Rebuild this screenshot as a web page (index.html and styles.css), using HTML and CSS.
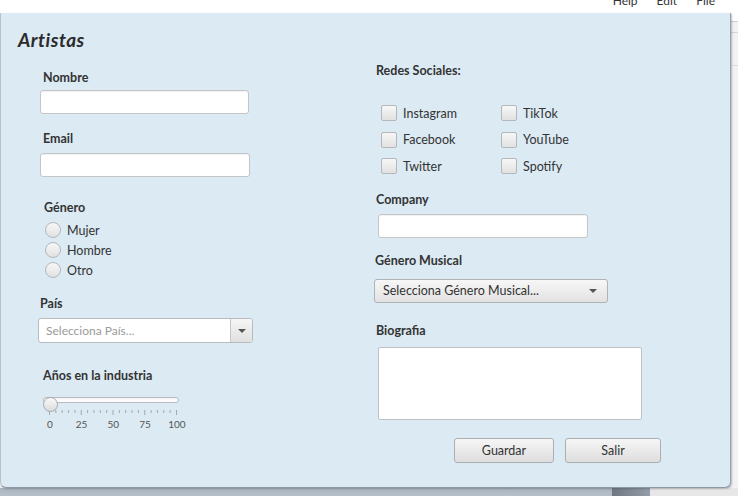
FILE: index.html
```html
<!DOCTYPE html>
<html lang="es">
<head>
<meta charset="utf-8">
<title>Artistas</title>
<link rel="stylesheet" href="styles.css">
</head>
<body>
<div class="menubar">
  <span class="menu-item">Help</span>
  <span class="menu-item">Edit</span>
  <span class="menu-item">File</span>
</div>
<div class="main">
  <div class="panel">
    <h1 class="title">Artistas</h1>
    <div class="columns">
      <div class="col col-left">
        <label class="lbl lbl-nombre">Nombre</label>
        <div class="field field-nombre"></div>
        <label class="lbl lbl-email">Email</label>
        <div class="field field-email"></div>
        <label class="lbl lbl-genero">Género</label>
        <div class="radios">
          <div class="radio-row"><span class="radio"></span><span>Mujer</span></div>
          <div class="radio-row"><span class="radio"></span><span>Hombre</span></div>
          <div class="radio-row"><span class="radio"></span><span>Otro</span></div>
        </div>
        <label class="lbl lbl-pais">País</label>
        <div class="combo-edit">
          <span class="combo-prompt">Selecciona País...</span>
          <span class="combo-arrow-btn"><span class="arrow"></span></span>
        </div>
        <label class="lbl lbl-anos">Años en la industria</label>
        <div class="slider">
          <div class="slider-bar">
            <div class="track"></div>
            <span class="thumb"></span>
          </div>
          <svg class="ticks" width="136" height="5" viewBox="0 0 136 5">
            <g stroke="#a3a9ae" stroke-width="1">
              <line x1="6.5" y1="0" x2="6.5" y2="5"/>
              <line x1="12.85" y1="0" x2="12.85" y2="3"/>
              <line x1="19.2" y1="0" x2="19.2" y2="3"/>
              <line x1="25.55" y1="0" x2="25.55" y2="3"/>
              <line x1="31.9" y1="0" x2="31.9" y2="3"/>
              <line x1="38.25" y1="0" x2="38.25" y2="5"/>
              <line x1="44.6" y1="0" x2="44.6" y2="3"/>
              <line x1="50.95" y1="0" x2="50.95" y2="3"/>
              <line x1="57.3" y1="0" x2="57.3" y2="3"/>
              <line x1="63.65" y1="0" x2="63.65" y2="3"/>
              <line x1="70" y1="0" x2="70" y2="5"/>
              <line x1="76.35" y1="0" x2="76.35" y2="3"/>
              <line x1="82.7" y1="0" x2="82.7" y2="3"/>
              <line x1="89.05" y1="0" x2="89.05" y2="3"/>
              <line x1="95.4" y1="0" x2="95.4" y2="3"/>
              <line x1="101.75" y1="0" x2="101.75" y2="5"/>
              <line x1="108.1" y1="0" x2="108.1" y2="3"/>
              <line x1="114.45" y1="0" x2="114.45" y2="3"/>
              <line x1="120.8" y1="0" x2="120.8" y2="3"/>
              <line x1="127.15" y1="0" x2="127.15" y2="3"/>
              <line x1="133.5" y1="0" x2="133.5" y2="5"/>
            </g>
          </svg>
          <div class="tick-labels">
            <span>0</span><span>25</span><span>50</span><span>75</span><span>100</span>
          </div>
        </div>
      </div>
      <div class="col col-right">
        <label class="lbl lbl-redes">Redes Sociales:</label>
        <div class="checks">
          <div class="check-row"><span class="checkbox"></span><span>Instagram</span></div>
          <div class="check-row"><span class="checkbox"></span><span>TikTok</span></div>
          <div class="check-row"><span class="checkbox"></span><span>Facebook</span></div>
          <div class="check-row"><span class="checkbox"></span><span>YouTube</span></div>
          <div class="check-row"><span class="checkbox"></span><span>Twitter</span></div>
          <div class="check-row"><span class="checkbox"></span><span>Spotify</span></div>
        </div>
        <label class="lbl lbl-company">Company</label>
        <div class="field field-company"></div>
        <label class="lbl lbl-gmusical">Género Musical</label>
        <div class="combo-btn">
          <span>Selecciona Género Musical...</span>
          <span class="arrow"></span>
        </div>
        <label class="lbl lbl-bio">Biografia</label>
        <div class="textarea"></div>
        <div class="buttons">
          <button class="btn btn-guardar">Guardar</button>
          <button class="btn btn-salir">Salir</button>
        </div>
      </div>
    </div>
  </div>
  <div class="side">
    <div class="side-top"></div>
    <div class="side-mid"></div>
    <div class="side-low"></div>
  </div>
</div>
<div class="under">
  <div class="under-a"></div>
  <div class="under-b"></div>
  <div class="under-c"></div>
</div>
</body>
</html>
```
FILE: styles.css
```css
* { box-sizing: border-box; }
html, body {
  margin: 0;
  padding: 0;
  width: 738px;
  height: 496px;
  overflow: hidden;
  background: #eeeeee;
  font-family: Lato, "Liberation Sans", sans-serif;
  font-size: 12px;
  color: #333333;
}
.menubar {
  height: 13px;
  background: #ffffff;
  overflow: hidden;
  display: flex;
  justify-content: flex-end;
  gap: 19px;
  padding-right: 23px;
}
.menu-item {
  display: block;
  line-height: 12px;
  margin-top: -5px;
  font-size: 12px;
  color: #333;
}
.main {
  display: flex;
  height: 475px;
}
.panel {
  width: 731px;
  height: 475px;
  background: #dbeaf3;
  border-right: 1px solid #9aa3ab;
  border-bottom: 1px solid #8f99a3;
  border-left: 1px solid #b9c3cc;
  border-radius: 0 0 6px 6px;
  box-shadow: 1px 1px 2px rgba(60, 70, 80, 0.35);
  padding-top: 15px;
  position: relative;
  z-index: 1;
}
.title {
  margin: 0 0 0 17px;
  font-size: 19px;
  line-height: 24px;
  font-weight: 700;
  font-style: italic;
  letter-spacing: 0.5px;
  color: #2b2b2b;
}
.columns {
  display: flex;
}
.col {
  display: flex;
  flex-direction: column;
  align-items: flex-start;
}
.col-left {
  width: 373px;
  padding-left: 37px;
}
.col-right {
  width: 356px;
}
.lbl {
  display: block;
  font-weight: 700;
  font-size: 12.5px;
  line-height: 16px;
  color: #333;
}
.lbl-nombre { margin: 18px 0 0 5px; }
.lbl-email { margin: 17px 0 0 5px; }
.lbl-genero { margin: 23px 0 0 6px; }
.lbl-pais { margin: 16px 0 0 2px; }
.lbl-anos { margin: 25px 0 0 5px; }

.field {
  height: 24px;
  background: #ffffff;
  border: 1px solid #c3c6c9;
  border-radius: 3px;
  box-shadow: inset 0 1px 1px rgba(0,0,0,0.06);
}
.field-nombre { width: 209px; margin: 4px 0 0 2px; }
.field-email { width: 210px; margin: 6px 0 0 2px; }

.radios { margin: 4px 0 0 7px; }
.radio-row {
  display: flex;
  align-items: center;
  gap: 6px;
  height: 20px;
  font-size: 12.5px;
}
.radio {
  width: 16px;
  height: 16px;
  border-radius: 50%;
  border: 1px solid #b5b8bb;
  background: linear-gradient(#f7f7f7, #e1e1e1);
}

.combo-edit {
  margin: 6px 0 0 0;
  width: 215px;
  height: 25px;
  display: flex;
  background: #ffffff;
  border: 1px solid #b9bcbf;
  border-radius: 3px;
  overflow: hidden;
}
.combo-prompt {
  flex: 1;
  padding-left: 7px;
  line-height: 23px;
  color: #9a9a9a;
}
.combo-arrow-btn {
  width: 22px;
  display: flex;
  align-items: center;
  justify-content: center;
  border-left: 1px solid #c6c6c6;
  background: linear-gradient(#f6f6f6, #e0e0e0);
}
.arrow {
  width: 0;
  height: 0;
  border-left: 4px solid transparent;
  border-right: 4px solid transparent;
  border-top: 4px solid #555;
}

.slider {
  margin: 9px 0 0 5px;
  width: 140px;
}
.slider-bar {
  position: relative;
  height: 14px;
  width: 136px;
}
.track {
  margin-top: 4px;
  height: 6px;
  width: 136px;
  border-radius: 3px;
  border: 1px solid #b9bcbf;
  background: linear-gradient(#f3f3f3, #ffffff);
}
.thumb {
  position: absolute;
  left: 0;
  top: 0;
  width: 15px;
  height: 15px;
  border-radius: 50%;
  border: 1px solid #a8abae;
  background: linear-gradient(#fafafa, #dadada);
}
.ticks {
  display: block;
  margin-top: -1px;
}
.tick-labels {
  display: grid;
  grid-template-columns: repeat(5, 31.75px);
  margin: 2px 0 0 -9px;
  font-size: 10px;
  line-height: 14px;
  color: #555;
  text-align: center;
}

.lbl-redes { margin: 11px 0 0 2px; }
.checks {
  margin: 21px 0 0 7px;
  display: grid;
  grid-template-columns: 120px 120px;
}
.check-row {
  display: flex;
  align-items: center;
  gap: 6px;
  height: 26.5px;
  font-size: 12.5px;
}
.checkbox {
  width: 16px;
  height: 16px;
  border-radius: 2px;
  border: 1px solid #b5b8bb;
  background: linear-gradient(#f7f7f7, #e1e1e1);
}
.lbl-company { margin: 12px 0 0 2px; }
.field-company { width: 210px; margin: 6px 0 0 4px; }
.lbl-gmusical { margin: 15px 0 0 1px; }
.combo-btn {
  margin: 10px 0 0 0;
  width: 234px;
  height: 24px;
  display: flex;
  align-items: center;
  justify-content: space-between;
  padding: 0 10px 0 8px;
  border: 1px solid #b0b3b6;
  border-radius: 3px;
  background: linear-gradient(#f7f7f7, #e2e2e2);
  color: #333;
  font-size: 12.5px;
}
.lbl-bio { margin: 20px 0 0 2px; }
.textarea {
  margin: 8px 0 0 4px;
  width: 264px;
  height: 73px;
  background: #ffffff;
  border: 1px solid #bfc2c5;
  border-radius: 2px;
}
.buttons {
  display: flex;
  gap: 11px;
  margin: 18px 0 0 80px;
}
.btn {
  height: 25px;
  border: 1px solid #acafb2;
  border-radius: 3px;
  background: linear-gradient(#f6f6f6, #dedede);
  font-family: Lato, "Liberation Sans", sans-serif;
  font-size: 12.5px;
  color: #333;
  padding: 0;
}
.btn-guardar { width: 100px; }
.btn-salir { width: 96px; }

.side {
  flex: 1;
  background: #f2f2f2;
  display: flex;
  flex-direction: column;
}
.side-top {
  height: 9px;
  background: #ffffff;
  border-bottom: 1px solid #cfcfcf;
}
.side-mid {
  height: 11px;
  border-bottom: 1px solid #d6d6d6;
}
.side-low {
  height: 33px;
  border-bottom: 1px solid #dddddd;
}
.under {
  display: flex;
  height: 8px;
}
.under-a {
  width: 612px;
  background: linear-gradient(#a9b5c0, #b6c0c9);
}
.under-b {
  width: 38px;
  background: linear-gradient(90deg, #6f7882, #959ea8);
}
.under-c {
  flex: 1;
  background: #e7e7e7;
}
```
